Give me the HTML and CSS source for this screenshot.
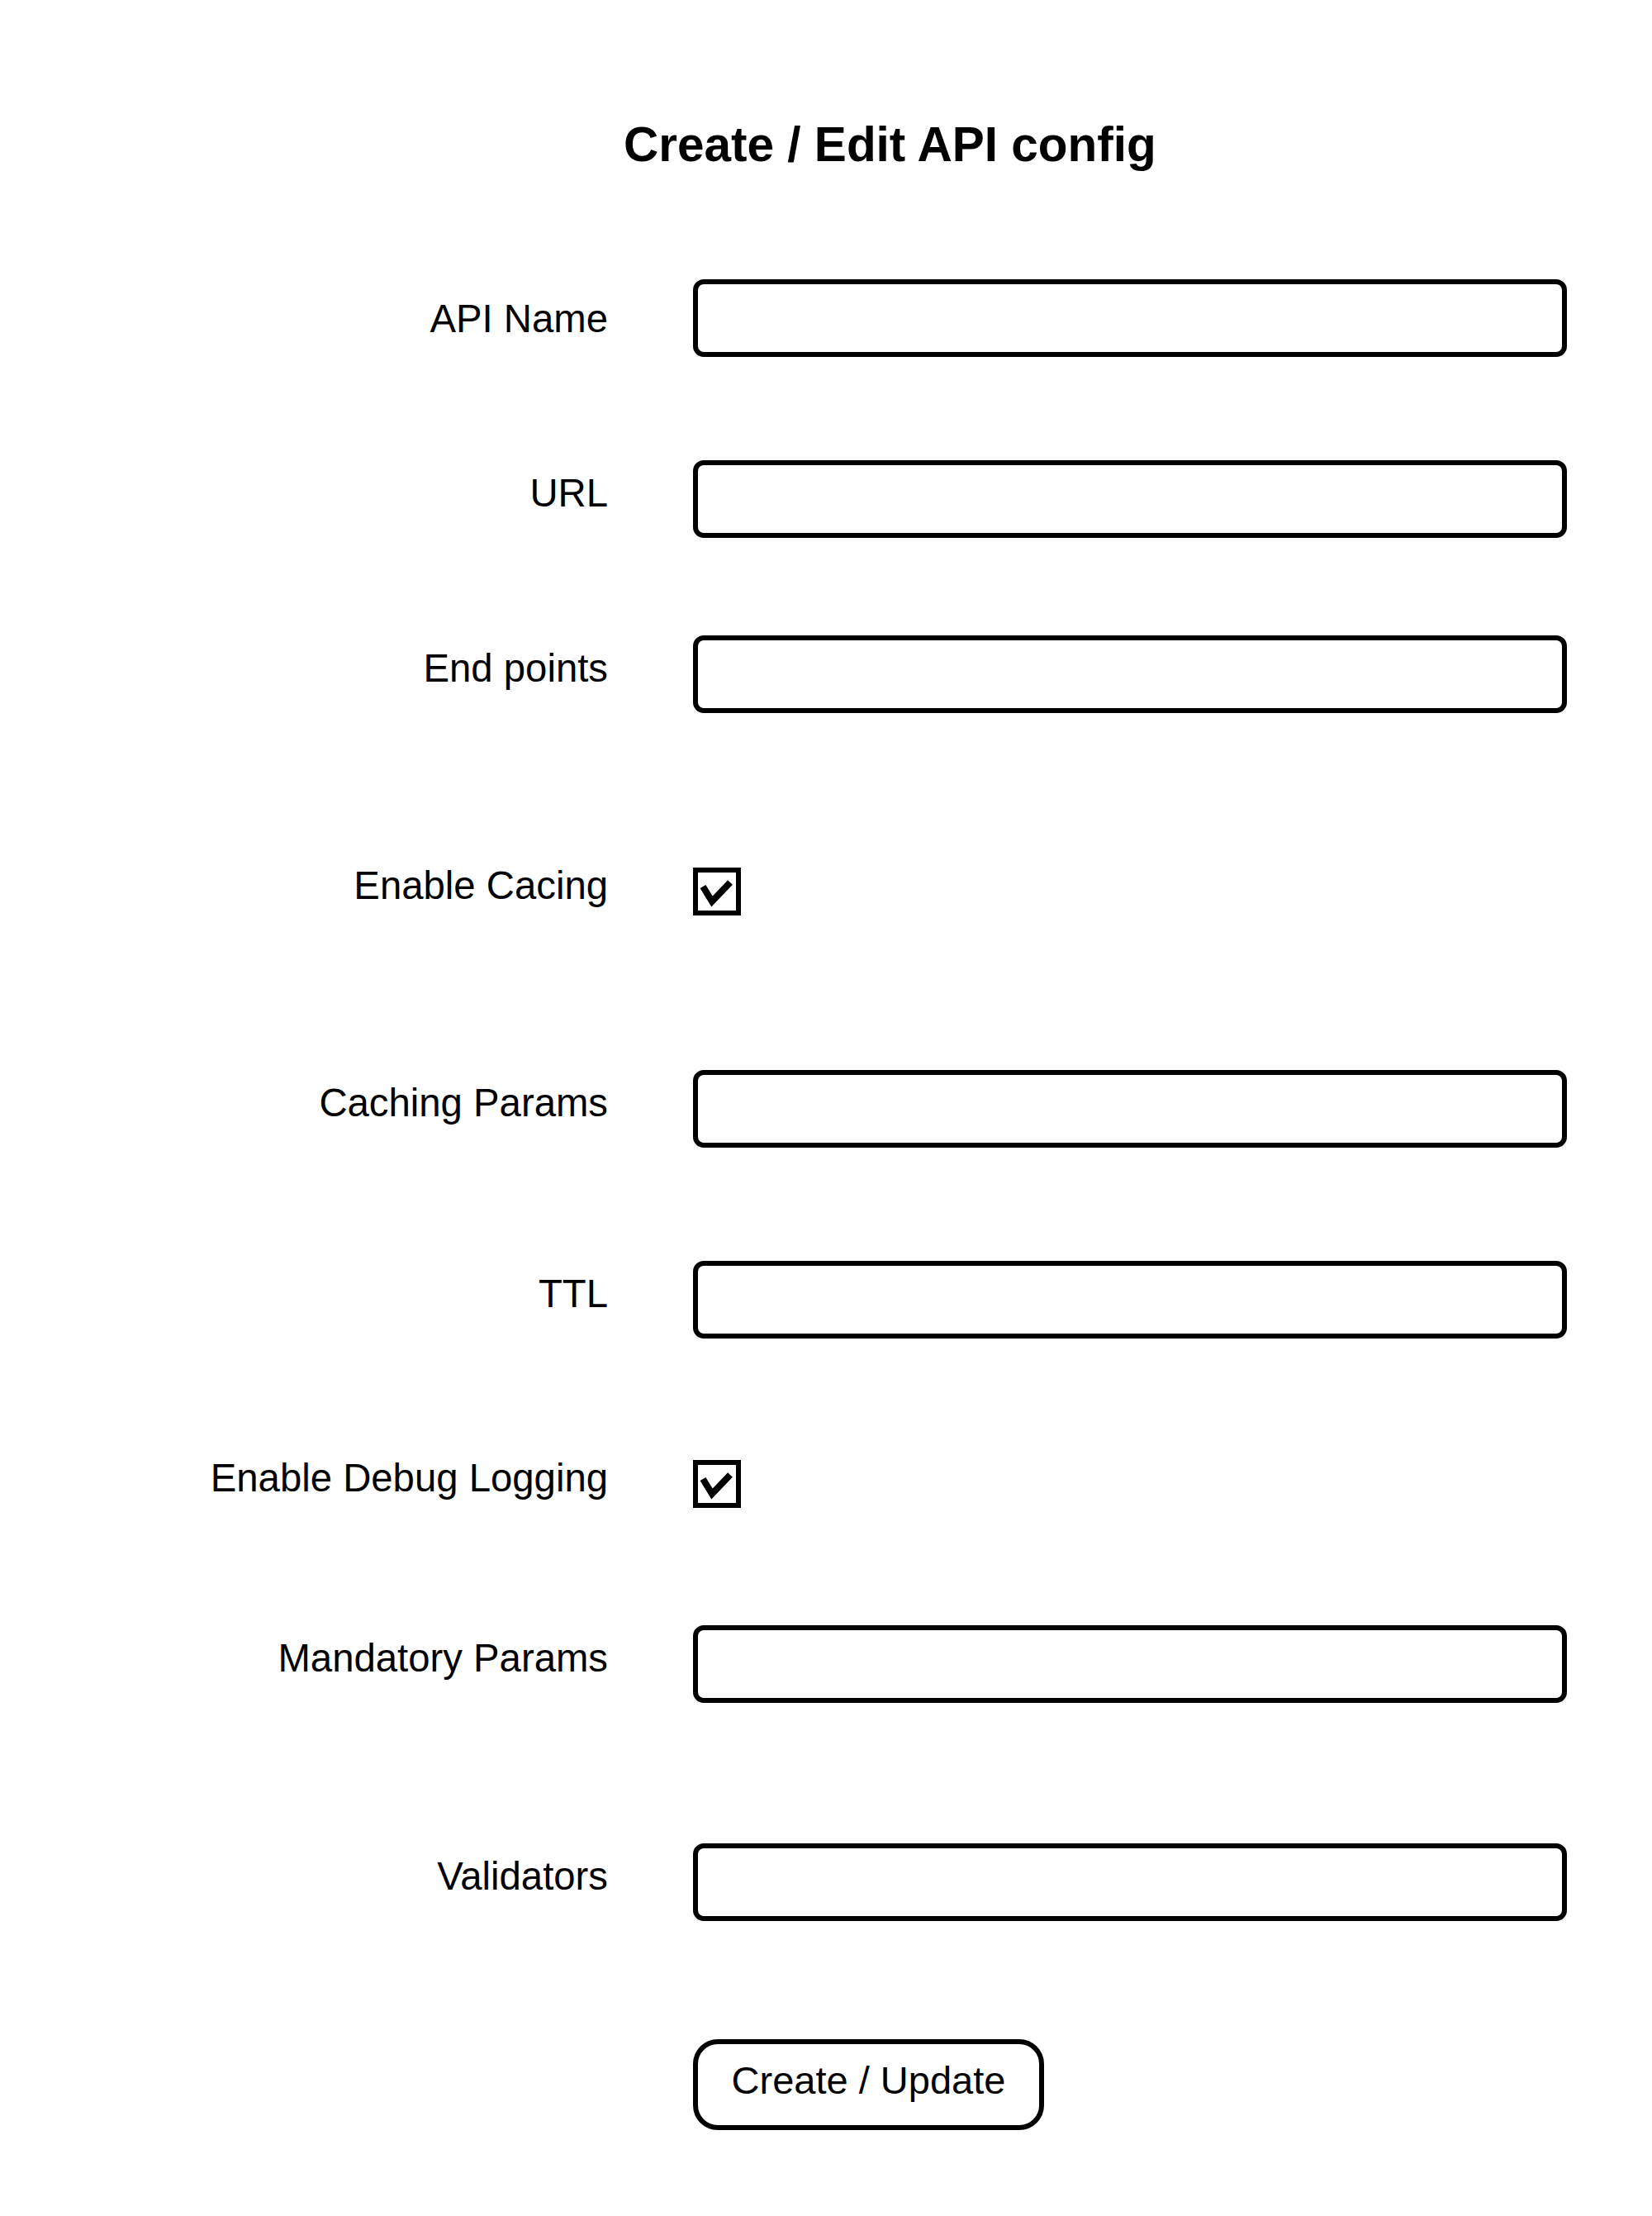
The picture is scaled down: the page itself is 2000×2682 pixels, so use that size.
FILE: index.html
```html
<!DOCTYPE html>
<html>
<head>
<meta charset="utf-8">
<link rel="stylesheet" href="styles.css">
</head>
<body>
<div class="page">
  <h1 class="title">Create / Edit API config</h1>
  <div class="form">
    <div class="row row-name"><label class="label">API Name</label><div class="input"></div></div>
    <div class="row row-url"><label class="label">URL</label><div class="input"></div></div>
    <div class="row row-end"><label class="label">End points</label><div class="input"></div></div>
    <div class="row row-cache"><label class="label">Enable Cacing</label>
      <div class="check"><svg viewBox="0 0 58 58" width="58" height="58"><rect x="3" y="3" width="52" height="52" fill="none" stroke="#000" stroke-width="6"/><polyline points="12,23 23,41 45,18" fill="none" stroke="#000" stroke-width="8" stroke-linejoin="miter"/></svg></div></div>
    <div class="row row-cparams"><label class="label">Caching Params</label><div class="input"></div></div>
    <div class="row row-ttl"><label class="label">TTL</label><div class="input"></div></div>
    <div class="row row-debug"><label class="label">Enable Debug Logging</label>
      <div class="check"><svg viewBox="0 0 58 58" width="58" height="58"><rect x="3" y="3" width="52" height="52" fill="none" stroke="#000" stroke-width="6"/><polyline points="12,23 23,41 45,18" fill="none" stroke="#000" stroke-width="8" stroke-linejoin="miter"/></svg></div></div>
    <div class="row row-mand"><label class="label">Mandatory Params</label><div class="input"></div></div>
    <div class="row row-valid"><label class="label">Validators</label><div class="input"></div></div>
    <div class="row row-btn"><span class="label"></span><button class="button">Create / Update</button></div>
  </div>
</div>
</body>
</html>
```
FILE: styles.css
```css
html, body {
  margin: 0;
  padding: 0;
  background: #fff;
}
body {
  width: 2000px;
  height: 2682px;
  font-family: "Liberation Sans", Arial, sans-serif;
  color: #000;
}
.page {
  display: flex;
  flex-direction: column;
}
.title {
  margin: 0;
  padding-top: 141px;
  padding-left: 755px;
  font-size: 58.5px;
  font-weight: bold;
  line-height: 67px;
}
.form {
  display: flex;
  flex-direction: column;
}
.row {
  display: grid;
  grid-template-columns: 736px 1058px;
  column-gap: 103px;
  align-items: center;
}
.label {
  text-align: right;
  font-size: 47.3px;
  line-height: 54px;
  position: relative;
  top: -7px;
}
.row-name .label { top: 1px; }
.input {
  box-sizing: border-box;
  height: 94px;
  border: 6px solid #000;
  border-radius: 13px;
}
.check {
  height: 58px;
  display: flex;
}
.check svg { display: block; }
.button {
  box-sizing: border-box;
  width: 425px;
  height: 110px;
  border: 6px solid #000;
  border-radius: 30px;
  background: #fff;
  font-family: "Liberation Sans", Arial, sans-serif;
  font-size: 47px;
  color: #000;
  padding: 0 0 12px 0;
}
.row-name { margin-top: 130px; }
.row-url { margin-top: 125px; }
.row-end { margin-top: 118px; }
.row-cache { margin-top: 187px; }
.row-cparams { margin-top: 187px; }
.row-ttl { margin-top: 137px; }
.row-debug { margin-top: 147px; }
.row-mand { margin-top: 142px; }
.row-valid { margin-top: 170px; }
.row-btn { margin-top: 143px; }
```
